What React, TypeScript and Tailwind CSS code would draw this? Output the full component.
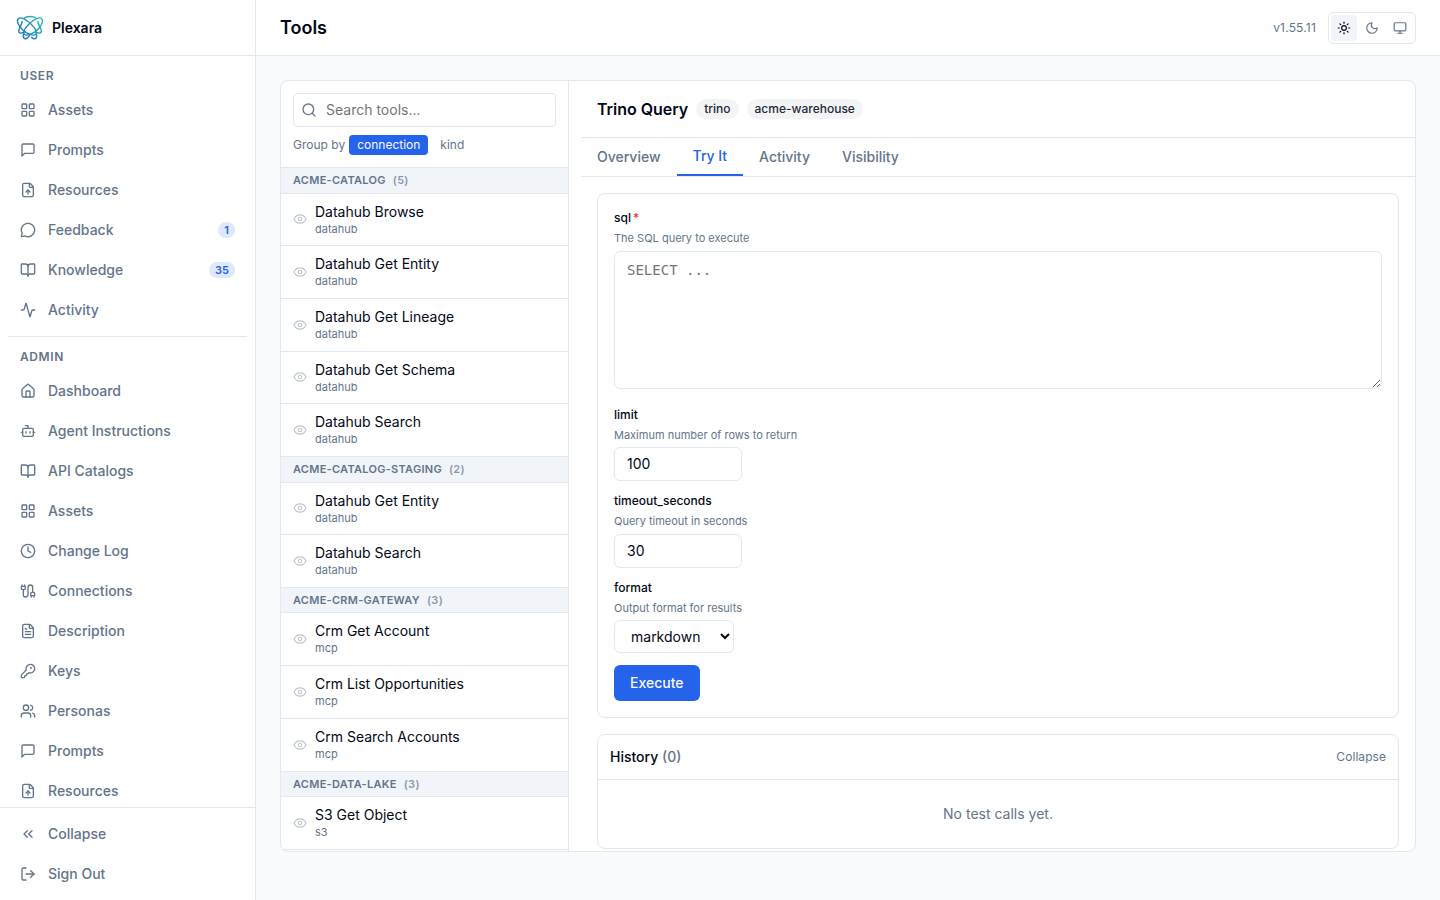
import { useState } from "react";
import {
  Activity,
  BookOpen,
  Bot,
  Cable,
  ChevronsLeft,
  Clock,
  Eye,
  FileText,
  FileUp,
  House,
  KeyRound,
  LayoutGrid,
  LogOut,
  MessageCircle,
  Monitor,
  Moon,
  Search,
  Sun,
  Users,
} from "lucide-react";
import clsx from "clsx";
import type { ComponentType } from "react";

type IconType = ComponentType<{ className?: string }>;

interface NavEntry {
  label: string;
  icon: IconType;
  badge?: number;
}

function MessageIcon({ className }: { className?: string }) {
  return (
    <svg viewBox="0 0 24 24" fill="none" stroke="currentColor" strokeWidth="2" strokeLinecap="round" strokeLinejoin="round" className={className}>
      <path d="M21 15a2 2 0 0 1-2 2H7l-4 4V5a2 2 0 0 1 2-2h14a2 2 0 0 1 2 2z" />
    </svg>
  );
}

const userNav: NavEntry[] = [
  { label: "Assets", icon: LayoutGrid },
  { label: "Prompts", icon: MessageIcon },
  { label: "Resources", icon: FileUp },
  { label: "Feedback", icon: MessageCircle, badge: 1 },
  { label: "Knowledge", icon: BookOpen, badge: 35 },
  { label: "Activity", icon: Activity },
];

const adminNav: NavEntry[] = [
  { label: "Dashboard", icon: House },
  { label: "Agent Instructions", icon: Bot },
  { label: "API Catalogs", icon: BookOpen },
  { label: "Assets", icon: LayoutGrid },
  { label: "Change Log", icon: Clock },
  { label: "Connections", icon: Cable },
  { label: "Description", icon: FileText },
  { label: "Keys", icon: KeyRound },
  { label: "Personas", icon: Users },
  { label: "Prompts", icon: MessageIcon },
  { label: "Resources", icon: FileUp },
];

const toolGroups = [
  {
    name: "acme-catalog",
    count: 5,
    kind: "datahub",
    tools: ["Datahub Browse", "Datahub Get Entity", "Datahub Get Lineage", "Datahub Get Schema", "Datahub Search"],
  },
  { name: "acme-catalog-staging", count: 2, kind: "datahub", tools: ["Datahub Get Entity", "Datahub Search"] },
  {
    name: "acme-crm-gateway",
    count: 3,
    kind: "mcp",
    tools: ["Crm Get Account", "Crm List Opportunities", "Crm Search Accounts"],
  },
  { name: "acme-data-lake", count: 3, kind: "s3", tools: ["S3 Get Object"] },
];

const tabs = ["Overview", "Try It", "Activity", "Visibility"];

function Logo() {
  return (
    <svg viewBox="0 0 28 28" className="size-7" fill="none" strokeWidth="1.4" strokeLinecap="round">
      <defs>
        <linearGradient id="logo" x1="2" y1="24" x2="26" y2="4" gradientUnits="userSpaceOnUse">
          <stop offset="0" stopColor="#2472b4" />
          <stop offset="0.5" stopColor="#1c90bb" />
          <stop offset="1" stopColor="#2cc4b0" />
        </linearGradient>
      </defs>
      <g stroke="url(#logo)">
        <path d="M8 4.2C10.5 2 17.5 2 20 4.2" />
        <path d="M19.5 20.5C17.5 22.3 11 20 6.5 15.8C2.3 11.8 0.3 6.8 2.3 4.7C4.8 2.4 10.5 5.6 15.2 10.2C19.4 14.4 21.3 18.6 19.5 20.5Z" />
        <path d="M8.5 20.5C10.5 22.3 17 20 21.5 15.8C25.7 11.8 27.7 6.8 25.7 4.7C23.2 2.4 17.5 5.6 12.8 10.2C8.6 14.4 6.7 18.6 8.5 20.5Z" />
        <path d="M6.2 7.5C5.4 10 4.8 12.5 3.2 15.2C2 17.6 3 19.2 5 19.1C6.2 19 7.2 18.7 8.2 18.2" />
        <path d="M21.8 7.5C22.6 10 23.2 12.5 24.8 15.2C26 17.6 25 19.2 23 19.1C21.8 19 20.8 18.7 19.8 18.2" />
        <path d="M7.4 20.5C7 23.2 7.8 24.8 9.5 24.8C11.3 24.8 12.5 23.4 13.5 21.5" />
        <path d="M20.6 20.5C21 23.2 20.2 24.8 18.5 24.8C17.3 24.8 16.4 24.2 15.6 23.2" />
      </g>
    </svg>
  );
}

function NavItem({ label, icon: Icon, badge }: NavEntry) {
  return (
    <button className="flex w-full items-center gap-3 rounded-md px-3 py-2 text-sm font-medium text-[#64748b]">
      <Icon className="size-4 shrink-0" />
      <span>{label}</span>
      {badge !== undefined && (
        <span className="ml-auto rounded-full bg-[#2563eb]/15 px-1.5 text-[11px] leading-4 font-semibold text-[#2563eb]">
          {badge}
        </span>
      )}
    </button>
  );
}

function SectionLabel({ children }: { children: string }) {
  return <div className="px-3 py-1 text-xs font-semibold tracking-wider text-[#64748b] uppercase">{children}</div>;
}

function Sidebar() {
  return (
    <aside className="flex w-64 shrink-0 flex-col border-r border-[#e2e8f0] bg-white">
      <div className="flex h-14 shrink-0 items-center gap-2 border-b border-[#e2e8f0] px-4">
        <Logo />
        <span className="text-sm font-semibold">Plexara</span>
      </div>
      <nav className="min-h-0 flex-1 space-y-1 overflow-hidden p-2">
        <SectionLabel>User</SectionLabel>
        {userNav.map((item) => (
          <NavItem key={item.label} {...item} />
        ))}
        <div className="my-2 border-t border-[#e2e8f0]" />
        <SectionLabel>Admin</SectionLabel>
        {adminNav.map((item) => (
          <NavItem key={item.label} {...item} />
        ))}
      </nav>
      <div className="space-y-1 border-t border-[#e2e8f0] p-2">
        <NavItem label="Collapse" icon={ChevronsLeft} />
        <NavItem label="Sign Out" icon={LogOut} />
      </div>
    </aside>
  );
}

function Header() {
  return (
    <header className="flex h-14 shrink-0 items-center justify-between border-b border-[#e2e8f0] bg-white px-6">
      <h1 className="text-lg font-semibold">Tools</h1>
      <div className="flex items-center gap-3">
        <span className="text-xs tracking-[0.015em] text-[#64748b]">v1.55.11</span>
        <div className="flex items-center gap-0.5 rounded-md border border-[#e2e8f0] p-0.5 text-[#64748b]">
          <button className="rounded-sm bg-[#f1f5f9] p-1.5 text-[#020817]">
            <Sun className="size-3.5" />
          </button>
          <button className="rounded-sm p-1.5">
            <Moon className="size-3.5" />
          </button>
          <button className="rounded-sm p-1.5">
            <Monitor className="size-3.5" />
          </button>
        </div>
      </div>
    </header>
  );
}

function ToolList() {
  return (
    <div className="flex w-72 shrink-0 flex-col border-r border-[#e2e8f0]">
      <div className="space-y-2 border-b border-[#e2e8f0] p-3">
        <div className="relative">
          <Search className="absolute top-1/2 left-2 size-4 -translate-y-1/2 text-[#64748b]" />
          <input
            placeholder="Search tools..."
            className="block w-full rounded-sm border border-[#e2e8f0] bg-white py-1.5 pr-3 pl-8 text-sm outline-none placeholder:text-[#757575]"
          />
        </div>
        <div className="flex items-center gap-1 text-xs text-[#64748b]">
          <span>Group by</span>
          <button className="rounded-sm bg-[#2563eb] px-2 py-0.5 text-slate-50">connection</button>
          <button className="rounded-sm px-2 py-0.5">kind</button>
        </div>
      </div>
      <div className="min-h-0 flex-1 overflow-hidden">
        {toolGroups.map((group) => (
          <div key={group.name}>
            <div className="border-b border-[#e2e8f0] bg-[#f1f5f9] px-3 py-1 text-[11px] font-semibold tracking-wide text-[#64748b] uppercase">
              {group.name} <span className="ml-1 opacity-70">({group.count})</span>
            </div>
            {group.tools.map((tool) => (
              <button
                key={tool}
                className="flex w-full items-center gap-2 border-b border-[#e2e8f0] px-3 py-2 text-left text-sm"
              >
                <Eye className="size-3.5 shrink-0 text-[#64748b] opacity-40" />
                <div>
                  <div>{tool}</div>
                  <div className="text-[11px] leading-[1.4286] text-[#64748b]">{group.kind}</div>
                </div>
              </button>
            ))}
          </div>
        ))}
      </div>
    </div>
  );
}

function FieldLabel({ name, hint, required }: { name: string; hint: string; required?: boolean }) {
  return (
    <>
      <label className="mb-1 block text-xs font-medium">
        {name}
        {required && <span className="ml-0.5 text-red-500">*</span>}
      </label>
      <p className="mb-1 text-[11px] text-[#64748b]">{hint}</p>
    </>
  );
}

function TryItForm() {
  const [limit, setLimit] = useState("100");
  const [timeout, setTimeoutSeconds] = useState("30");

  return (
    <div className="space-y-3 rounded-lg border border-[#e2e8f0] p-4">
      <div>
        <FieldLabel name="sql" hint="The SQL query to execute" required />
        <textarea
          rows={6}
          placeholder="SELECT ..."
          className="w-full rounded-md border border-[#e2e8f0] bg-white px-3 py-2 font-['DejaVu_Sans_Mono',monospace] text-sm outline-none placeholder:text-[#757575]"
        />
      </div>
      <div>
        <FieldLabel name="limit" hint="Maximum number of rows to return" />
        <input
          value={limit}
          onChange={(e) => setLimit(e.target.value)}
          className="block w-32 rounded-md border border-[#e2e8f0] bg-white px-3 py-1.5 text-sm outline-none"
        />
      </div>
      <div>
        <FieldLabel name="timeout_seconds" hint="Query timeout in seconds" />
        <input
          value={timeout}
          onChange={(e) => setTimeoutSeconds(e.target.value)}
          className="block w-32 rounded-md border border-[#e2e8f0] bg-white px-3 py-1.5 text-sm outline-none"
        />
      </div>
      <div>
        <FieldLabel name="format" hint="Output format for results" />
        <select className="block w-[120px] rounded-md border border-[#e2e8f0] bg-white px-3 py-1.5 text-sm outline-none">
          <option>markdown</option>
          <option>json</option>
          <option>csv</option>
        </select>
      </div>
      <button className="block rounded-md bg-[#2563eb] px-4 py-2 text-sm font-medium text-slate-50">Execute</button>
    </div>
  );
}

function ToolDetail() {
  const [tab, setTab] = useState("Try It");

  return (
    <div className="ml-3 flex min-w-0 flex-1 flex-col">
      <div className="flex items-center gap-2 border-b border-[#e2e8f0] px-4 py-4">
        <h2 className="text-base font-semibold tracking-[-0.0025em]">Trino Query</h2>
        <span className="rounded-full bg-gray-100 px-2 py-0.5 text-xs font-medium text-gray-800">trino</span>
        <span className="rounded-full bg-gray-100 px-2 py-0.5 text-xs font-medium text-gray-800">acme-warehouse</span>
      </div>
      <div className="flex border-b border-[#e2e8f0]">
        {tabs.map((t) => (
          <button
            key={t}
            onClick={() => setTab(t)}
            className={clsx(
              "px-4 py-2 text-sm font-medium",
              t === tab ? "border-b-2 border-[#2563eb] text-[#2563eb]" : "text-[#64748b]",
            )}
          >
            {t}
          </button>
        ))}
      </div>
      <div className="min-h-0 flex-1 space-y-4 overflow-hidden p-4">
        <TryItForm />
        <div className="rounded-lg border border-[#e2e8f0]">
          <div className="flex items-center justify-between border-b border-[#e2e8f0] px-3 py-3">
            <h3 className="text-sm font-medium">
              History <span className="text-[#64748b]">(0)</span>
            </h3>
            <button className="text-xs tracking-[0.005em] text-[#64748b]">Collapse</button>
          </div>
          <p className="py-6 text-center text-sm text-[#64748b]">No test calls yet.</p>
        </div>
      </div>
    </div>
  );
}

export default function App() {
  return (
    <div className="flex h-screen overflow-hidden bg-[#f9fbfd] font-[Inter,sans-serif] text-[#020817]">
      <Sidebar />
      <div className="flex min-w-0 flex-1 flex-col">
        <Header />
        <main className="min-h-0 flex-1 p-6">
          <div className="flex h-[calc(100vh-8rem)] overflow-hidden rounded-lg border border-[#e2e8f0] bg-white">
            <ToolList />
            <ToolDetail />
          </div>
        </main>
      </div>
    </div>
  );
}
